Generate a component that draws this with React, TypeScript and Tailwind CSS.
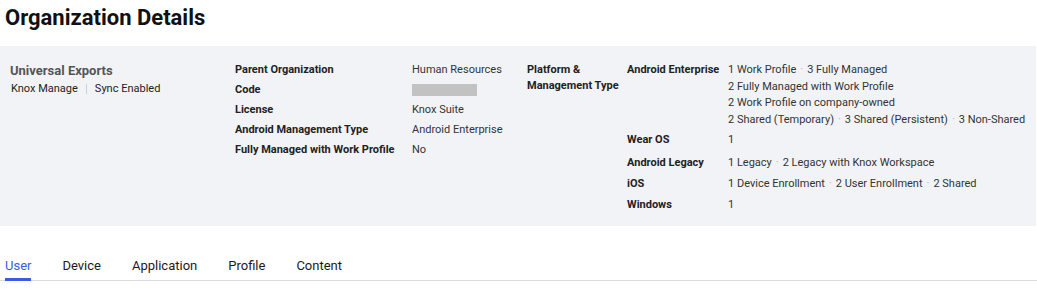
import React from "react";

const Dot = () => <span className="mx-[4px] text-[#b5b5b5]">·</span>;

function Row({ label, children, className = "" }: { label: string; children: React.ReactNode; className?: string }) {
  return (
    <div className={`flex ${className}`}>
      <div className="w-[177px] shrink-0 font-bold text-[#222] whitespace-nowrap">{label}</div>
      <div className="text-[#333] whitespace-nowrap">{children}</div>
    </div>
  );
}

function PRow({ label, children }: { label: string; children: React.ReactNode }) {
  return (
    <div className="flex">
      <div className="w-[101px] shrink-0 font-bold text-[#222] whitespace-nowrap">{label}</div>
      <div className="text-[#333] whitespace-nowrap">{children}</div>
    </div>
  );
}

export default function App() {
  return (
    <div className="w-[1037px] h-[296px] bg-white" style={{ fontFamily: "Roboto, 'Noto Sans', sans-serif" }}>
      <h1 className="pl-[5px] pt-[4px] text-[22px] leading-[28px] font-bold text-[#111]">Organization Details</h1>
      <div className="mt-[14px] w-[1036px] bg-[#f2f3f7] pl-[10px] pt-[16px] pb-[13px] flex text-[11px] leading-[16px]">
        <div className="w-[225px] shrink-0">
          <div className="text-[13px] leading-[18px] font-bold text-[#555]">Universal Exports</div>
          <div className="flex items-center pl-[1px] mt-[1px] text-[#222]">
            <span>Knox Manage</span>
            <span className="mx-[8px] inline-block w-px h-[10px] bg-[#d0d0d0]" />
            <span>Sync Enabled</span>
          </div>
        </div>
        <div className="w-[292px] shrink-0 flex flex-col gap-[4px]">
          <Row label="Parent Organization">Human Resources</Row>
          <Row label="Code">
            <div className="mt-[2px] w-[65px] h-[12px] bg-[#c2c2c2]" />
          </Row>
          <Row label="License">Knox Suite</Row>
          <Row label="Android Management Type">Android Enterprise</Row>
          <Row label="Fully Managed with Work Profile">No</Row>
        </div>
        <div className="w-[100px] shrink-0 font-bold text-[#222]">
          Platform &amp;
          <br />
          Management Type
        </div>
        <div className="flex flex-col gap-[5px]">
          <PRow label="Android Enterprise">
            <div className="leading-[16.5px]">
              <div>1 Work Profile<Dot />3 Fully Managed</div>
              <div>2 Fully Managed with Work Profile</div>
              <div>2 Work Profile on company-owned</div>
              <div>2 Shared (Temporary)<Dot />3 Shared (Persistent)<Dot />3 Non-Shared</div>
            </div>
          </PRow>
          <div className="-mt-[1px]">
            <PRow label="Wear OS">1</PRow>
          </div>
          <div className="mt-[2px]">
            <PRow label="Android Legacy">1 Legacy<Dot />2 Legacy with Knox Workspace</PRow>
          </div>
          <PRow label="iOS">1 Device Enrollment<Dot />2 User Enrollment<Dot />2 Shared</PRow>
          <PRow label="Windows">1</PRow>
        </div>
      </div>
      <div className="mt-[31px] border-b border-[#dcdce0] flex gap-[31px] pl-[5px] text-[13px] leading-[18px]">
        <div className="pb-[3px] border-b-[3px] border-[#3b5ce0] text-[#3b5ce0] -mb-px">User</div>
        <div className="pb-[5px] text-[#1a1a1a]">Device</div>
        <div className="pb-[5px] text-[#1a1a1a]">Application</div>
        <div className="pb-[5px] text-[#1a1a1a]">Profile</div>
        <div className="pb-[5px] text-[#1a1a1a]">Content</div>
      </div>
    </div>
  );
}
